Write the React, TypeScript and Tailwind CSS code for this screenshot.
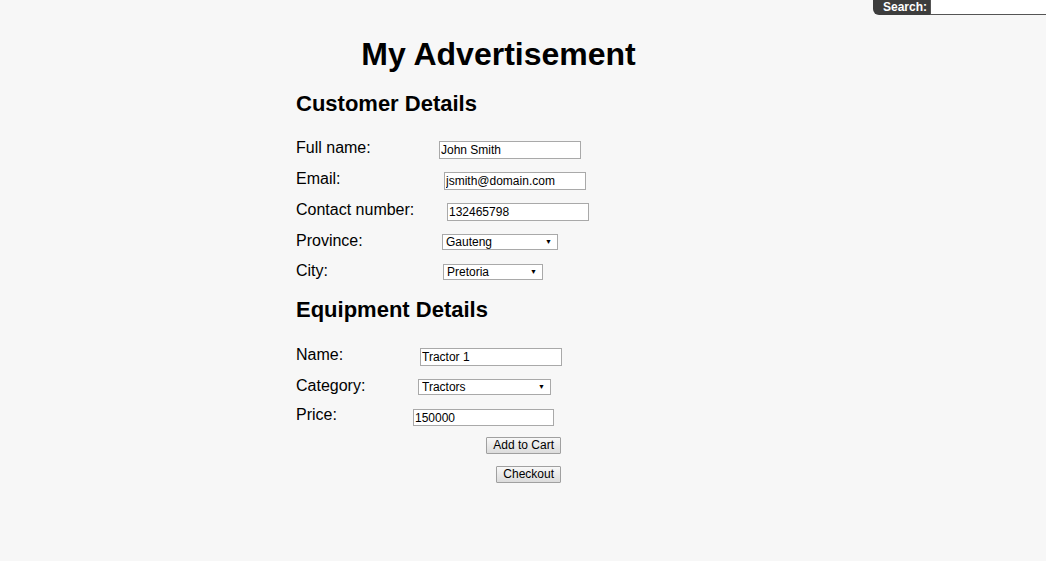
import { useState } from 'react';

const font = "font-['Liberation_Sans',Arial,sans-serif]";

function TextRow({ label, labelWidth, value, rowHeight, inputWidth = 142 }: {
  label: string;
  labelWidth: number;
  value: string;
  rowHeight: number;
  inputWidth?: number;
}) {
  const [val, setVal] = useState(value);
  return (
    <div className="flex items-start" style={{ height: rowHeight }}>
      <span className="text-[16px] leading-[18px] shrink-0" style={{ width: labelWidth }}>{label}</span>
      <input
        value={val}
        onChange={e => setVal(e.target.value)}
        className="mt-[2px] h-[18px] border border-[#a9a9a9] bg-white px-[1px] text-[12px] leading-[16px] text-black outline-none"
        style={{ width: inputWidth }}
      />
    </div>
  );
}

function SelectRow({ label, labelWidth, options, rowHeight, selectWidth }: {
  label: string;
  labelWidth: number;
  options: string[];
  rowHeight: number;
  selectWidth: number;
}) {
  return (
    <div className="flex items-start" style={{ height: rowHeight }}>
      <span className="text-[16px] leading-[18px] shrink-0" style={{ width: labelWidth }}>{label}</span>
      <div className="relative mt-[2px] flex" style={{ width: selectWidth }}>
        <select className="block h-[16px] w-full appearance-none border border-[#a9a9a9] bg-white pl-[3px] text-[12px] leading-[14px] text-black outline-none">
          {options.map(o => <option key={o}>{o}</option>)}
        </select>
        <span className="pointer-events-none absolute right-[6px] top-[4px] text-[7px] leading-[8px]">▼</span>
      </div>
    </div>
  );
}

function Btn({ children }: { children: string }) {
  return (
    <button className="h-[17px] rounded-[1px] border border-[#a0a0a0] bg-gradient-to-b from-[#f8f8f8] to-[#dcdcdc] px-[6px] text-[12px] leading-[15px] text-black">
      {children}
    </button>
  );
}

export default function App() {
  return (
    <div className={`relative min-h-screen bg-[#f7f7f7] text-black ${font}`}>
      {/* search */}
      <div className="absolute right-0 top-0 flex h-[15px]">
        <div className="flex h-[15px] w-[57px] items-center rounded-bl-[6px] bg-[#3d3d3d] pl-[10px] text-[12px] font-bold leading-[15px] text-white">
          Search:
        </div>
        <input className="h-[15px] w-[116px] border-b border-l border-[#555] bg-white text-[12px] outline-none" />
      </div>

      <div className="ml-[296px] w-[405px] pt-[36px]">
        <h1 className="text-center text-[32px] font-bold leading-[36px]">My Advertisement</h1>

        <h2 className="mt-[19px] text-[22px] font-bold leading-[26px]">Customer Details</h2>
        <div className="mt-[22px] flex flex-col">
          <TextRow label="Full name:" labelWidth={143} value="John Smith" rowHeight={31} />
          <TextRow label="Email:" labelWidth={148} value="jsmith@domain.com" rowHeight={31} />
          <TextRow label="Contact number:" labelWidth={151} value="132465798" rowHeight={31} />
          <SelectRow label="Province:" labelWidth={146} options={['Gauteng', 'Western Cape', 'KwaZulu-Natal']} rowHeight={30} selectWidth={116} />
          <SelectRow label="City:" labelWidth={147} options={['Pretoria', 'Johannesburg']} rowHeight={20} selectWidth={100} />
        </div>

        <h2 className="mt-[15px] text-[22px] font-bold leading-[26px]">Equipment Details</h2>
        <div className="mt-[23px] flex flex-col">
          <TextRow label="Name:" labelWidth={124} value="Tractor 1" rowHeight={31} />
          <SelectRow label="Category:" labelWidth={122} options={['Tractors', 'Harvesters', 'Ploughs']} rowHeight={29} selectWidth={133} />
          <div className="flex h-[21px] items-start">
            <span className="w-[117px] shrink-0 text-[16px] leading-[18px]">Price:</span>
            <input
              defaultValue="150000"
              autoFocus
              className="mt-[3px] h-[17px] w-[141px] border border-[#a9a9a9] bg-white px-[1px] text-[12px] leading-[15px] text-black caret-black outline-none"
            />
          </div>
        </div>

        <div className="mt-[10px] flex w-[265px] flex-col items-end gap-[12px]">
          <Btn>Add to Cart</Btn>
          <Btn>Checkout</Btn>
        </div>
      </div>
    </div>
  );
}
